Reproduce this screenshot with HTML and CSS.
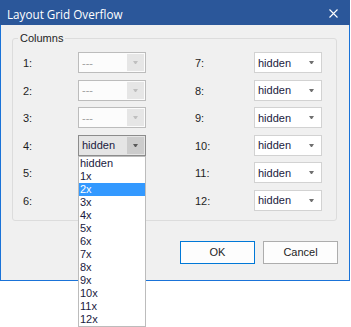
FILE: index.html
```html
<!DOCTYPE html>
<html>
<head>
<meta charset="utf-8">
<title>Layout Grid Overflow</title>
<link rel="stylesheet" href="styles.css">
</head>
<body>
<div class="window">
  <div class="titlebar">
    <span class="title">Layout Grid Overflow</span>
    <svg class="close" width="9" height="9" viewBox="0 0 9 9"><path d="M0.5 0.5L8.5 8.5M8.5 0.5L0.5 8.5" stroke="#fff" stroke-width="1.1" fill="none"/></svg>
  </div>
  <div class="client">
    <fieldset class="group">
      <legend class="legend">Columns</legend>
      <div class="grid">
        <span class="lbl">1:</span>
        <div class="combo disabled"><span class="val">---</span><span class="btn"><i class="arrow"></i></span></div>
        <span class="lbl right">7:</span>
        <div class="combo"><span class="val">hidden</span><span class="btn"><i class="arrow"></i></span></div>

        <span class="lbl">2:</span>
        <div class="combo disabled"><span class="val">---</span><span class="btn"><i class="arrow"></i></span></div>
        <span class="lbl right">8:</span>
        <div class="combo"><span class="val">hidden</span><span class="btn"><i class="arrow"></i></span></div>

        <span class="lbl">3:</span>
        <div class="combo disabled"><span class="val">---</span><span class="btn"><i class="arrow"></i></span></div>
        <span class="lbl right">9:</span>
        <div class="combo"><span class="val">hidden</span><span class="btn"><i class="arrow"></i></span></div>

        <span class="lbl">4:</span>
        <div class="combo open"><span class="val">hidden</span><span class="btn"><i class="arrow"></i></span>
          <ul class="list">
            <li>hidden</li>
            <li>1x</li>
            <li class="sel">2x</li>
            <li>3x</li>
            <li>4x</li>
            <li>5x</li>
            <li>6x</li>
            <li>7x</li>
            <li>8x</li>
            <li>9x</li>
            <li>10x</li>
            <li>11x</li>
            <li>12x</li>
          </ul>
        </div>
        <span class="lbl right">10:</span>
        <div class="combo"><span class="val">hidden</span><span class="btn"><i class="arrow"></i></span></div>

        <span class="lbl">5:</span>
        <div class="combo covered"></div>
        <span class="lbl right">11:</span>
        <div class="combo"><span class="val">hidden</span><span class="btn"><i class="arrow"></i></span></div>

        <span class="lbl">6:</span>
        <div class="combo covered"></div>
        <span class="lbl right">12:</span>
        <div class="combo"><span class="val">hidden</span><span class="btn"><i class="arrow"></i></span></div>
      </div>
    </fieldset>
    <div class="buttons">
      <button class="button default">OK</button>
      <button class="button">Cancel</button>
    </div>
  </div>
</div>
</body>
</html>
```
FILE: styles.css
```css
html, body {
  margin: 0;
  padding: 0;
  background: #ffffff;
}
body {
  min-height: 327px;
  font-family: "Liberation Sans", Arial, sans-serif;
  font-size: 11px;
  color: #1e1e1e;
}
.window {
  width: 350px;
}
.titlebar {
  height: 25px;
  box-sizing: border-box;
  background: #2b579a;
  color: #ffffff;
  display: flex;
  align-items: center;
  justify-content: space-between;
  padding: 0 12px 0 7px;
}
.title {
  font-family: "Open Sans", "Liberation Sans", sans-serif;
  font-size: 11.7px;
  padding-top: 2px;
}
.close {
  display: block;
  margin-top: 2px;
}
.client {
  height: 256px;
  box-sizing: border-box;
  background: #f0f0f0;
  border: 1px solid #1a73d8;
  border-top: 0;
  padding: 0 12px 0 11px;
  display: flex;
  flex-direction: column;
}
.group {
  margin: 7px 0 0;
  padding: 7px 14px 9px 10px;
  border: 1px solid #dcdcdc;
  border-radius: 3px;
  min-width: 0;
}
.legend {
  padding: 0 2px;
  margin-left: -5px;
  line-height: 13px;
  font-size: 11px;
}
.grid {
  display: grid;
  grid-template-columns: 55px 68px 49px 59px 68px;
  grid-template-rows: repeat(6, 21px);
  row-gap: 6.6px;
}
.lbl {
  align-self: center;
  padding-top: 1px;
}
.lbl.right {
  grid-column: 4;
}
.combo {
  position: relative;
  box-sizing: border-box;
  height: 21px;
  border: 1px solid #d2d2d2;
  background: #ffffff;
  display: flex;
  align-items: stretch;
}
.val {
  flex: 1;
  padding-left: 3px;
  display: flex;
  align-items: center;
  color: #1a1a40;
}
.btn {
  width: 17px;
  margin: 1px;
  display: flex;
  align-items: center;
  justify-content: center;
}
.arrow {
  display: block;
  width: 1px;
  height: 0;
  border-left: 2px solid transparent;
  border-right: 2px solid transparent;
  border-top: 3px solid #707070;
}
.combo.disabled {
  border-color: #bcbcbc;
  background: #fcfcfc;
}
.combo.disabled .val {
  color: #a0a0a0;
}
.combo.disabled .btn {
  background: #e6e6e6;
}
.combo.disabled .arrow {
  border-top-color: #bfbfbf;
}
.combo.open {
  border-color: #8c8c8c;
  background: #e5e5e5;
  z-index: 2;
}
.combo.open .btn {
  background: #cccccc;
}
.combo.open .arrow {
  border-top-color: #5a5a5a;
}
.list {
  position: absolute;
  left: -1px;
  top: calc(100% + 1px);
  width: 68px;
  box-sizing: border-box;
  margin: 0;
  padding: 0;
  list-style: none;
  background: #ffffff;
  border: 1px solid #bcbcbc;
}
.list li {
  height: 13px;
  line-height: 13px;
  padding-left: 1px;
  color: #1a1a40;
}
.list li.sel {
  background: #3399ff;
  color: #ffffff;
}
.buttons {
  display: flex;
  justify-content: flex-end;
  gap: 8px;
  margin-top: 20px;
  margin-right: -1px;
}
.button {
  width: 75px;
  height: 23px;
  box-sizing: border-box;
  border: 1px solid #adadad;
  background: #fdfdfd;
  font-family: "Liberation Sans", Arial, sans-serif;
  font-size: 11px;
  color: #1e1e1e;
  padding: 0;
  margin: 0;
}
.button.default {
  border-color: #0078d7;
}
```
